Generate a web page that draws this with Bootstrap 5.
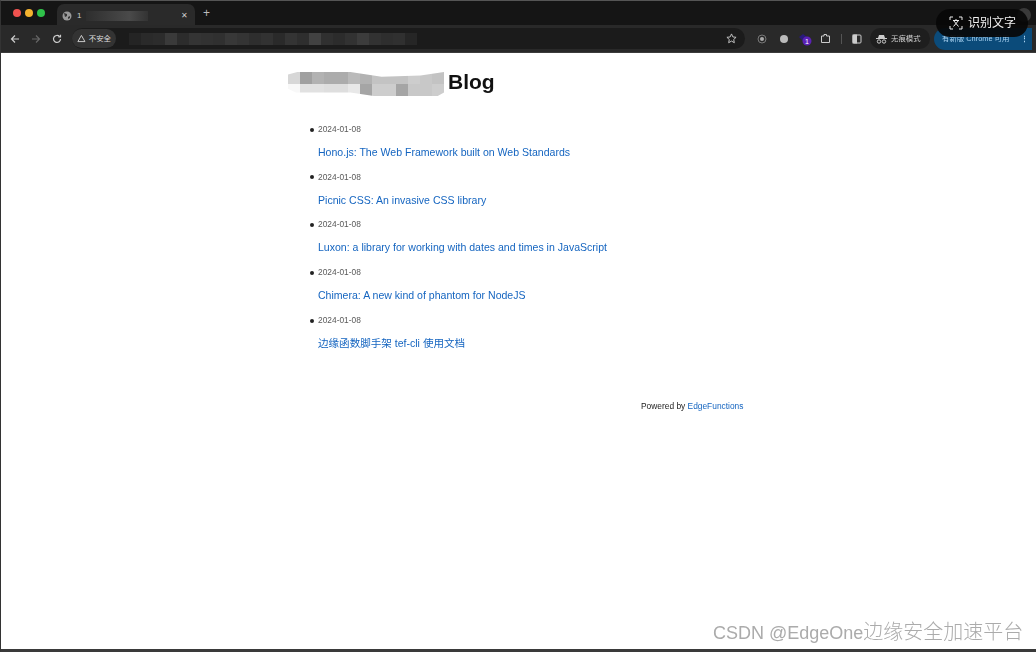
<!DOCTYPE html>
<html lang="zh"><head><meta charset="utf-8"><title>Blog</title>
<link href="https://cdn.jsdelivr.net/npm/bootstrap@5.3.0/dist/css/bootstrap.min.css" rel="stylesheet">
<style>
html,body{height:100%;overflow:hidden;background:#fff}
body{font-family:"Liberation Sans",Arial,"Noto Sans CJK SC",sans-serif;position:relative}
.frame{width:1036px;height:652px;border-left:1px solid #333;border-bottom:3px solid #3a3a3a;border-top:1px solid #555;filter:blur(.3px)}
.tabstrip{height:24px;background:#151515;padding-left:56px}
.lights{position:absolute;left:13px;top:9px;gap:4px}
.lights i{width:8px;height:8px;border-radius:50%;display:block}
.tabitem{width:138px;height:24px;background:#2a2a2a;border-radius:7px 7px 0 0;margin-top:3px;padding:0 7px 0 5px;color:#ccc;font-size:8px;gap:5px}
.tabblur{width:62px;height:10px;background:linear-gradient(90deg,#2e2e2e,#4a4a4a 70%,#333);margin-right:auto}
.plus{color:#bbb;font-size:12px;margin-left:8px;margin-top:6px;line-height:1}
.toolbar{height:28px;background:#292929;padding:0 4px 0 9px;border-bottom:1px solid #3b3b3b;color:#c8c8c8;gap:11px}
.urlbar{height:21px;width:673px;background:#1b1b1b;border-radius:11px;margin-left:-1px;padding-left:0}
.secure{height:19px;background:#333;border-radius:10px;padding:0 5px;font-size:7.400px;color:#ddd;gap:3px;white-space:nowrap;width:44px}
.urlblur{display:flex;margin-left:13px;height:12px}
.urlblur b{display:block;width:12px;height:12px}
.tool-a{margin-left:1px}.tool-b{margin-left:12px}.tool-c{margin-left:9px}.tool-d{margin-left:8px}.tool-e{margin-left:10px}.tool-f{margin-left:10px}
.sep{width:1px;height:10px;background:#555}
.incog{height:21px;background:#1e1e1e;border-radius:11px;padding:0 5px 0 6px;font-size:7.400px;gap:4px;color:#ccc;white-space:nowrap;width:60px;margin-left:-3px}
.update{height:22px;flex:1;background:#0b4b7a;border-radius:11px 0 0 11px;margin-left:-7px;color:#a9d2f0;font-size:7.400px;padding:0 4px 0 8px;white-space:nowrap}
.pageblock{padding:16px 0 0 287px}
.blogtitle{font-size:21px;font-weight:700;color:#111;margin:0;gap:4px;line-height:26px}
.redact{display:grid;grid-template-columns:repeat(13,12px);grid-auto-rows:12px;width:156px;height:24px;overflow:hidden;transform:translateY(2px);clip-path:polygon(0 10%,6% 0,40% 0,60% 20%,85% 15%,100% 0,100% 85%,96% 100%,55% 100%,40% 85%,5% 85%,0 70%)}
.redact b{display:block}
.postlist{margin:27px 0 0;padding-left:30px;list-style:none;font-size:11px}
.postlist li{height:47.700px}
.postdate{font-size:8.400px;color:#5a5a5a;line-height:12px;padding-top:1px}
.postdate::before{content:"";display:inline-block;width:4px;height:4px;border-radius:50%;background:#222;margin-left:-8px;margin-right:4px;vertical-align:middle}
.postlink{display:block;font-size:10.550px;color:#1565c0;text-decoration:none;line-height:13px;margin-top:11px}
.poweredline{font-size:8.400px;color:#222;margin:41px 0 0 353px;line-height:11px}
.poweredline a{color:#1565c0;text-decoration:none}
.ocr{position:absolute;left:936px;top:9px;width:92px;height:28px;background:rgba(8,8,8,.93);border-radius:14px;color:#f0f0f0;font-size:12px;gap:5px;padding-left:13px}
.chev{position:absolute;left:1017px;top:8px;width:14px;height:14px;border-radius:50%;background:#3a3a3a}
.wm{position:absolute;left:713px;top:620px;font-size:18px;color:#ababab;line-height:24px;font-family:"Liberation Sans","Noto Sans CJK SC",sans-serif;white-space:nowrap}
.wm span{font-size:20px;font-weight:300}
</style></head>
<body>
<div class="frame d-flex flex-column">
  <div class="tabstrip d-flex align-items-start">
    <div class="tabitem d-flex align-items-center">
      <svg width="10" height="10" viewBox="0 0 10 10"><circle cx="5" cy="5" r="4.500" fill="#999"/><path d="M2 2l3 1 0 2-2 1zM6 6l2-1 0 2-2 1z" fill="#333"/></svg>
      <span>1</span><span class="tabblur"></span><span>✕</span>
    </div>
    <span class="plus">+</span>
  </div>
  <div class="toolbar d-flex align-items-center">
    <svg width="10" height="10" viewBox="0 0 10 10" fill="none" stroke="#ccc" stroke-width="1.200"><path d="M9 5H1.500M5 1.500 1.500 5 5 8.500"/></svg>
    <svg width="10" height="10" viewBox="0 0 10 10" fill="none" stroke="#666" stroke-width="1.200"><path d="M1 5h7.500M5 1.500 8.500 5 5 8.500"/></svg>
    <svg width="10" height="10" viewBox="0 0 10 10" fill="none" stroke="#ccc" stroke-width="1.200"><path d="M8.500 5a3.500 3.500 0 1 1-1-2.500M8.500 .8v2.200H6.300"/></svg>
    <div class="urlbar d-flex align-items-center">
      <div class="secure d-flex align-items-center">
        <svg width="10" height="9" viewBox="0 0 10 9" fill="none" stroke="#ddd"><path d="M5 1 9 8H1z"/></svg><span>不安全</span>
      </div>
      <div class="urlblur" id="ub"></div>
      <svg class="ms-auto" width="11" height="11" viewBox="0 0 12 12" fill="none" stroke="#ccc"><path d="M6 1l1.500 3.300 3.500.4-2.600 2.400.7 3.500L6 8.800 2.900 10.600l.7-3.500L1 4.700l3.500-.4z"/></svg>
      <span class="ms-2"></span>
    </div>
    <div class="d-flex align-items-center">
      <svg class="tool-a" width="10" height="10" viewBox="0 0 10 10"><circle cx="5" cy="5" r="2" fill="#aaa"/><circle cx="5" cy="5" r="4" fill="none" stroke="#777"/></svg>
      <svg class="tool-b" width="10" height="10" viewBox="0 0 10 10"><circle cx="5" cy="5" r="4" fill="#bbb"/></svg>
      <svg class="tool-c" width="14" height="14" viewBox="0 0 14 14"><path d="M1 5l4-3 4 3-4 4z" fill="#2a1a7a"/><circle cx="9" cy="9" r="4.500" fill="#5b21b6"/><text x="9" y="12" font-size="7" fill="#fff" text-anchor="middle" font-family="Liberation Sans">1</text></svg>
      <svg class="tool-d" width="11" height="11" viewBox="0 0 11 11" fill="none" stroke="#ccc"><path d="M1.500 3h2.500V1.500h2.500V3h3v6.500h-8z"/></svg>
      <span class="sep tool-e"></span>
      <svg class="tool-f" width="10" height="10" viewBox="0 0 10 10" fill="none" stroke="#ccc"><rect x="1" y="1" width="8" height="8" rx="1"/><rect x="1" y="1" width="3.500" height="8" fill="#ccc"/></svg>
    </div>
    <div class="incog d-flex align-items-center">
      <svg width="11" height="10" viewBox="0 0 11 10"><path d="M3 1h5l1 3H2z" fill="#ccc"/><path d="M0 4.500h11" stroke="#ccc"/><circle cx="3" cy="7.500" r="1.700" fill="none" stroke="#ccc"/><circle cx="8" cy="7.500" r="1.700" fill="none" stroke="#ccc"/></svg>
      <span>无痕模式</span>
    </div>
    <div class="update d-flex align-items-center justify-content-between"><span>有新版 Chrome 可用</span><span class="fw-bold">⋮</span></div>
  </div>
  <main class="pageblock">
    <h1 class="blogtitle d-flex align-items-center">
      <span class="redact" id="rd"></span><span>Blog</span>
    </h1>
    <ul class="postlist">
      <li><div class="postdate">2024-01-08</div><a class="postlink" href="#">Hono.js: The Web Framework built on Web Standards</a></li>
      <li><div class="postdate">2024-01-08</div><a class="postlink" href="#">Picnic CSS: An invasive CSS library</a></li>
      <li><div class="postdate">2024-01-08</div><a class="postlink" href="#">Luxon: a library for working with dates and times in JavaScript</a></li>
      <li><div class="postdate">2024-01-08</div><a class="postlink" href="#">Chimera: A new kind of phantom for NodeJS</a></li>
      <li><div class="postdate">2024-01-08</div><a class="postlink" href="#">边缘函数脚手架 tef-cli 使用文档</a></li>
    </ul>
    <p class="poweredline">Powered by <a href="#">EdgeFunctions</a></p>
  </main>
</div>
<div class="lights d-flex"><i style="background:#f0524f"></i><i style="background:#f5b32f"></i><i style="background:#2fc24a"></i></div>
<div class="chev"></div>
<div class="ocr d-flex align-items-center">
  <svg width="14" height="14" viewBox="0 0 14 14" fill="none" stroke="#eee"><path d="M1 4V1h3M10 1h3v3M13 10v3h-3M4 13H1v-3M4 4.500h6M7 3v1.500M4.500 4.500 9.500 10.500M9.500 4.500 4.500 10.500"/></svg>
  <span>识别文字</span>
</div>
<div class="wm">CSDN @EdgeOne<span>边缘安全加速平台</span></div>
<script>
var r=[215,160,178,172,172,186,178,195,195,195,205,200,195,
       248,225,225,222,222,232,165,205,205,165,200,200,205];
document.getElementById('rd').innerHTML=r.map(function(v){return '<b style="background:rgb('+v+','+v+','+v+')"></b>'}).join('');
var u=[36,42,44,58,44,52,50,48,56,52,46,50,42,52,46,66,48,44,50,60,50,46,48,38];
document.getElementById('ub').innerHTML=u.map(function(v){return '<b style="background:rgb('+v+','+v+','+v+')"></b>'}).join('');
</script>
</body></html>
